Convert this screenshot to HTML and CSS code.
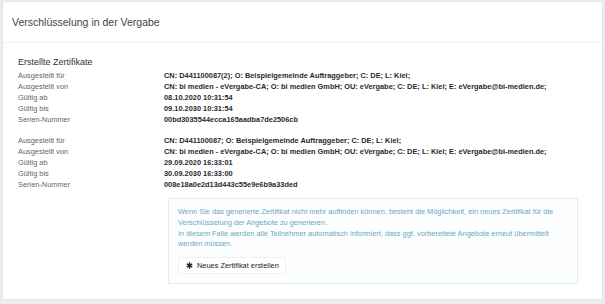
FILE: index.html
```html
<!DOCTYPE html>
<html lang="de">
<head>
    <meta charset="UTF-8">
    <title>Verschlüsselung in der Vergabe</title>
    <link rel="stylesheet" href="styles.css">
</head>
<body>
    <div class="panel">
        <div class="panel-heading">Verschlüsselung in der Vergabe</div>
        <div class="panel-body">
            <h4>Erstellte Zertifikate</h4>

            <dl class="cert">
                <dt>Ausgestellt für</dt>
                <dd>CN: D441100087(2); O: Beispielgemeinde Auftraggeber; C: DE; L: Kiel;</dd>
                <dt>Ausgestellt von</dt>
                <dd>CN: bi medien - eVergabe-CA; O: bi medien GmbH; OU: eVergabe; C: DE; L: Kiel; E: eVergabe@bi-medien.de;</dd>
                <dt>Gültig ab</dt>
                <dd>08.10.2020 10:31:54</dd>
                <dt>Gültig bis</dt>
                <dd>09.10.2030 10:31:54</dd>
                <dt>Serien-Nummer</dt>
                <dd>00bd3035544ecca165aadba7de2506cb</dd>
            </dl>

            <dl class="cert">
                <dt>Ausgestellt für</dt>
                <dd>CN: D441100087; O: Beispielgemeinde Auftraggeber; C: DE; L: Kiel;</dd>
                <dt>Ausgestellt von</dt>
                <dd>CN: bi medien - eVergabe-CA; O: bi medien GmbH; OU: eVergabe; C: DE; L: Kiel; E: eVergabe@bi-medien.de;</dd>
                <dt>Gültig ab</dt>
                <dd>29.09.2020 16:33:01</dd>
                <dt>Gültig bis</dt>
                <dd>30.09.2030 16:33:00</dd>
                <dt>Serien-Nummer</dt>
                <dd>008e18a0e2d13d443c55e9e6b9a33ded</dd>
            </dl>

            <div class="info">
                <p>Wenn Sie das generierte Zertifikat nicht mehr auffinden können, besteht die Möglichkeit, ein neues Zertifikat für die Verschlüsselung der Angebote zu generieren.</p>
                <p>In diesem Falle werden alle Teilnehmer automatisch informiert, dass ggf. vorbereitete Angebote erneut übermittelt werden müssen.</p>
                <button class="btn">
                    <svg class="icon" viewBox="0 0 10 10" width="7" height="7">
                        <g stroke="#222" stroke-width="2.2" stroke-linecap="butt">
                            <line x1="5" y1="0.5" x2="5" y2="9.5"/>
                            <line x1="1.1" y1="2.75" x2="8.9" y2="7.25"/>
                            <line x1="1.1" y1="7.25" x2="8.9" y2="2.75"/>
                        </g>
                    </svg>
                    Neues Zertifikat erstellen
                </button>
            </div>
        </div>
    </div>
</body>
</html>
```

FILE: styles.css
```css
/* Seite */
body {
    margin: 0;
    padding: 1px 2px 0 2px;
    background: #ececec;
    font-family: "Liberation Sans", Arial, sans-serif;
    color: #333;
}

.panel {
    background: #fff;
    border: 1px solid #e6e6e6;
    height: 299px;
    box-sizing: border-box;
}

.panel-heading {
    height: 40px;
    line-height: 40px;
    padding-left: 9px;
    font-size: 10.5px;
    color: #444;
    border-bottom: 1px solid #f0f0f0;
}

.panel-body {
    padding: 13px 24px 0 15px;
}

h4 {
    margin: 0 0 2px;
    font-size: 9px;
    line-height: 12px;
    font-weight: normal;
    color: #333;
}

.cert {
    display: grid;
    grid-template-columns: 146px 1fr;
    margin: 0 0 10px;
    font-size: 7.4px;
    line-height: 11px;
}

.cert dt {
    color: #666;
}

.cert dd {
    margin: 0;
    font-weight: bold;
    color: #2a2a2a;
    white-space: nowrap;
}

.info {
    margin: -2px 0 0 150px;
    padding: 8px 9px 9px;
    border: 1px solid #d8edf4;
    background: #fcfeff;
    color: #6aa7c4;
    font-size: 7.4px;
    line-height: 10.5px;
}

.info p {
    margin: 0 0 0.5px;
}

.btn {
    display: flex;
    align-items: center;
    gap: 4px;
    margin-top: 7px;
    height: 17px;
    padding: 0 6px 0 7px;
    background: #fff;
    border: 1px solid #f0f0f0;
    border-radius: 2px;
    font-family: "Liberation Sans", Arial, sans-serif;
    font-size: 7.4px;
    color: #222;
}
```
